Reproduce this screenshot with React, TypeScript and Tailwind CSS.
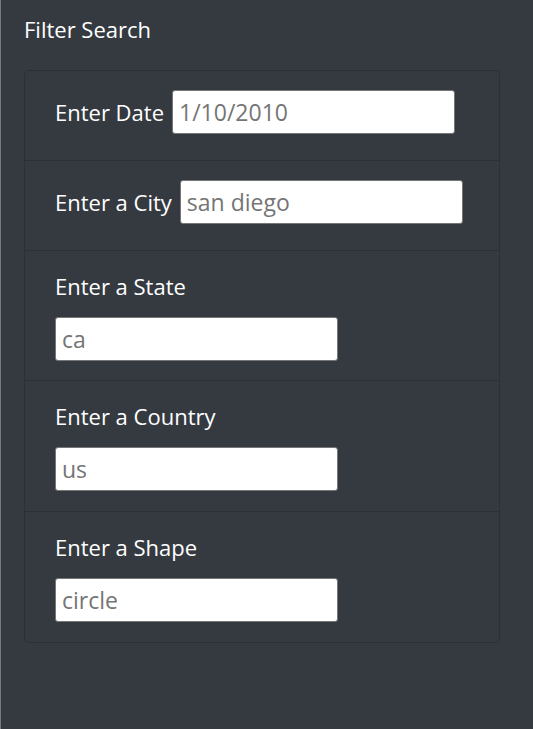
import React from "react";

const inlineFields = [
  { label: "Enter Date", placeholder: "1/10/2010" },
  { label: "Enter a City", placeholder: "san diego" },
];

const stackedFields = [
  { label: "Enter a State", placeholder: "ca", pad: "pb-[19px]" },
  { label: "Enter a Country", placeholder: "us", pad: "pb-[20px]" },
  { label: "Enter a Shape", placeholder: "circle", pad: "pb-[20px]" },
];

const inputClass =
  "w-[283px] h-[44px] bg-white border border-[#767676] rounded-[3px] px-[6px] text-[23px] text-[#495057] placeholder:text-[#757575] outline-none";

export default function App() {
  return (
    <div className="min-h-screen bg-[#353a41] border-l border-[#7a7a7a] font-['Open_Sans',sans-serif] text-white">
      {/* Title */}
      <h5 className="pl-[23px] pt-[13px] text-[22px] leading-[33px] mb-[24px]">Filter Search</h5>

      {/* Filter list */}
      <ul className="ml-[23px] w-[476px] border border-[#2c3036] rounded-[5px]">
        {inlineFields.map((f, i) => (
          <li
            key={f.label}
            className={`pl-[30px] pt-[19px] pb-[26px] flex items-center ${i > 0 ? "border-t border-[#2c3036]" : ""}`}
          >
            <label className="text-[22px] leading-[33px] mr-[8px]">{f.label}</label>
            <input type="text" placeholder={f.placeholder} className={inputClass} />
          </li>
        ))}
        {stackedFields.map((f) => (
          <li key={f.label} className={`pl-[30px] pt-[19px] ${f.pad} border-t border-[#2c3036]`}>
            <label className="block text-[22px] leading-[33px] mb-[14px]">{f.label}</label>
            <input type="text" placeholder={f.placeholder} className={inputClass} />
          </li>
        ))}
      </ul>
    </div>
  );
}
